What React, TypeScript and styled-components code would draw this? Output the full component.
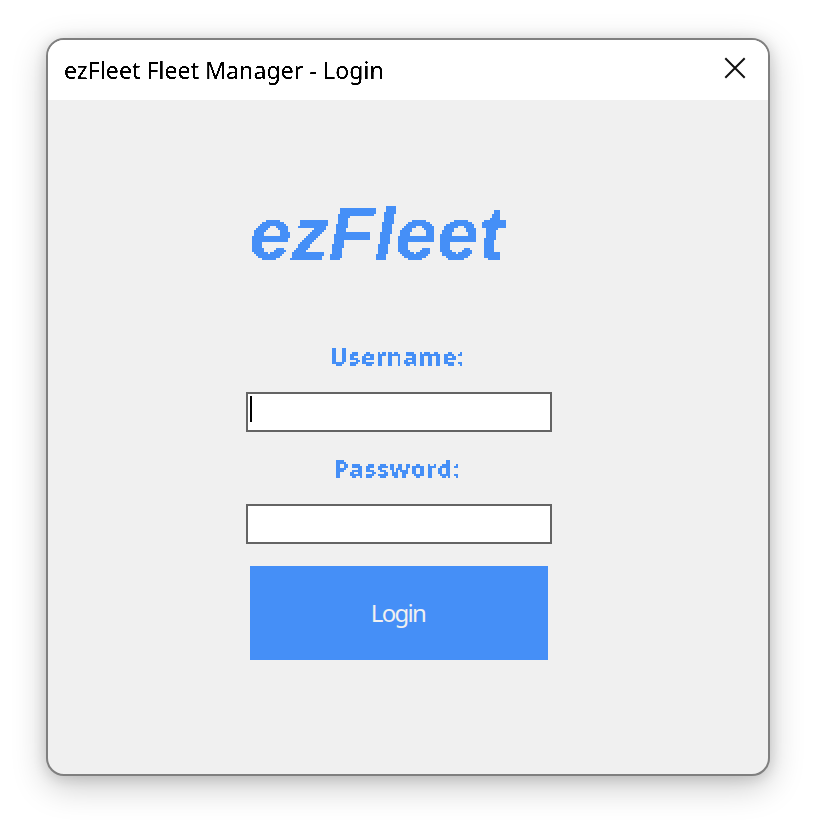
import React from 'react';
import styled, { createGlobalStyle } from 'styled-components';

const blue = '#458ff7';

const GlobalStyle = createGlobalStyle`
  * { box-sizing: border-box; }
  body { margin: 0; background: #fff; overflow: hidden; }
`;

const Desktop = styled.main`
  height: 830px;
  padding: 38px 46px 54px;
  font-family: 'Noto Sans', 'Open Sans', sans-serif;
`;

const Window = styled.section`
  width: 724px;
  height: 738px;
  border: 2px solid #7f7f7f;
  border-radius: 18px;
  background: #f0f0f0;
  overflow: hidden;
  box-shadow: 0 10px 34px rgba(0, 0, 0, 0.22), 0 2px 14px rgba(0, 0, 0, 0.14);
`;

const TitleBar = styled.header`
  display: flex;
  align-items: flex-start;
  justify-content: space-between;
  height: 60px;
  padding: 17px 22px 0 16px;
  background: #fff;
`;

const Title = styled.h1`
  margin: -3px 0 0;
  font-size: 23px;
  font-weight: 400;
  line-height: 32px;
  letter-spacing: 0.1px;
  white-space: nowrap;
  color: #000;
  filter: url(#crisp);
`;

const CloseButton = styled.button`
  display: flex;
  padding: 0;
  border: 0;
  background: none;
`;

const Form = styled.form`
  display: flex;
  flex-direction: column;
  width: 306px;
  margin-left: 198px;
  padding-top: 90px;
`;

const Logo = styled.div`
  height: 86px;
  padding-left: 3px;
  font: italic 700 75px/86px 'Liberation Sans', Arial, sans-serif;
  white-space: nowrap;
  color: ${blue};
  filter: url(#mosaic);
`;

const Label = styled.label<{ $gap: number; $spacing: number }>`
  margin-top: ${p => p.$gap}px;
  height: 32px;
  padding-right: 5px;
  text-align: center;
  font-size: 24px;
  font-weight: 700;
  line-height: 32px;
  letter-spacing: ${p => p.$spacing}px;
  color: ${blue};
  filter: url(#mosaic);
`;

const Field = styled.div`
  display: flex;
  height: 40px;
  margin-top: 20px;
  padding: 2px;
  border: 2px solid #646464;
  background: #fff;
`;

const Caret = styled.span`
  width: 2px;
  height: 26px;
  background: #000;
`;

const LoginButton = styled.button`
  width: 298px;
  height: 94px;
  margin: 22px 0 0 4px;
  padding: 0 2px 1px 0;
  border: 0;
  background: ${blue};
  color: #f0f0f0;
  font: 400 24px/32px 'Noto Sans', 'Open Sans', sans-serif;
`;

const ButtonText = styled.span`
  display: block;
  letter-spacing: -1.7px;
`;

const FilterDefs = styled.svg`
  position: absolute;
  width: 0;
  height: 0;
`;

export default function App() {
  return (
    <>
      <GlobalStyle />
      <FilterDefs aria-hidden="true">
        <filter id="crisp" x="0" y="0" width="100%" height="100%" colorInterpolationFilters="sRGB">
          <feComponentTransfer>
            <feFuncA type="linear" slope="5" intercept="-1.7" />
          </feComponentTransfer>
        </filter>
        {/* Samples one pixel in each 2x2 cell and spreads it over the cell. */}
        <filter id="mosaic" x="0" y="0" width="100%" height="100%" colorInterpolationFilters="sRGB">
          <feFlood x="0" y="0" width="1" height="1" floodColor="#000" result="dot" />
          <feOffset in="dot" x="0" y="0" width="2" height="2" dx="0" dy="0" />
          <feTile result="grid" />
          <feComposite in="SourceGraphic" in2="grid" operator="in" result="sample" />
          <feOffset in="sample" dx="1" dy="0" result="right" />
          <feMerge result="row">
            <feMergeNode in="sample" />
            <feMergeNode in="right" />
          </feMerge>
          <feOffset in="row" dx="0" dy="1" result="below" />
          <feMerge>
            <feMergeNode in="row" />
            <feMergeNode in="below" />
          </feMerge>
          <feComponentTransfer>
            <feFuncA type="discrete" tableValues="0 1" />
          </feComponentTransfer>
        </filter>
      </FilterDefs>
      <Desktop>
        <Window>
          <TitleBar>
            <Title>ezFleet Fleet Manager - Login</Title>
            <CloseButton aria-label="Close">
              <svg width="22" height="22" viewBox="0 0 22 22">
                <path d="M1.3 1.3 20.7 20.7M20.7 1.3 1.3 20.7" fill="none" stroke="#111" strokeWidth="2" />
              </svg>
            </CloseButton>
          </TitleBar>
          <Form onSubmit={e => e.preventDefault()}>
            <Logo>ezFleet</Logo>
            <Label $gap={64} $spacing={0.6}>Username:</Label>
            <Field><Caret /></Field>
            <Label $gap={20} $spacing={0.6}>Password:</Label>
            <Field />
            <LoginButton><ButtonText>Login</ButtonText></LoginButton>
          </Form>
        </Window>
      </Desktop>
    </>
  );
}
